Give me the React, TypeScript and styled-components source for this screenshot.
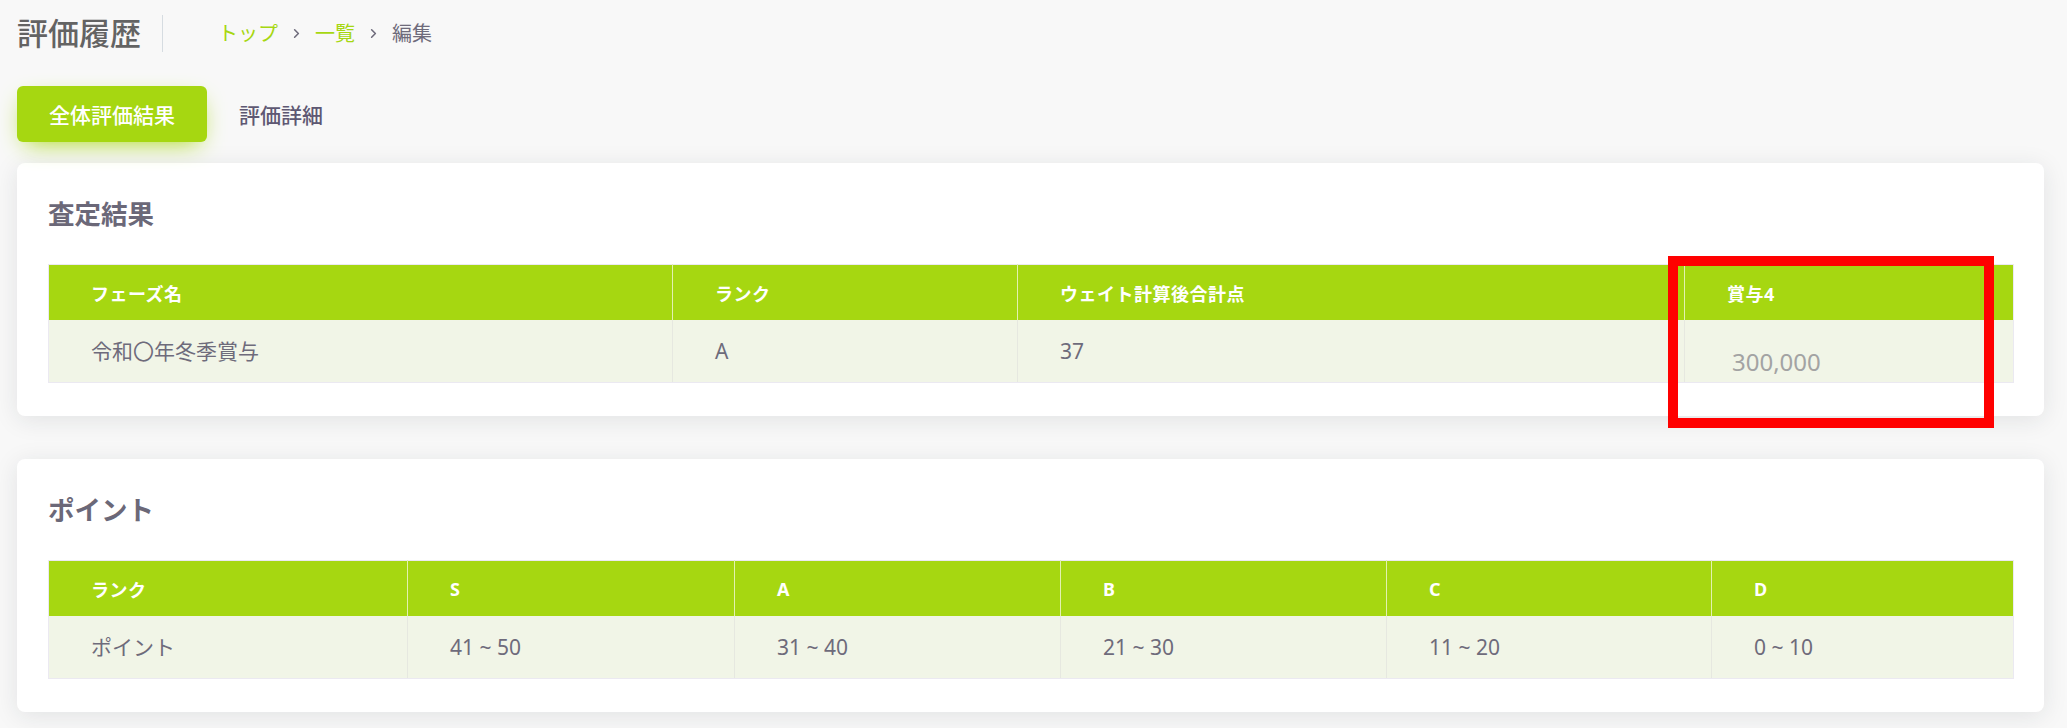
import React from 'react';
import styled, { createGlobalStyle } from 'styled-components';

// Type層
type Column = { label: string; width: number };
type Props = { className?: string };

const GREEN = '#a6d711';

const GlobalStyle = createGlobalStyle`
  body {
    margin: 0;
    background: #f8f8f8;
    font-family: 'Noto Sans', 'Noto Sans CJK JP', sans-serif;
    color: #6e6b7b;
  }
`;

// データ
const resultColumns: Column[] = [
  { label: 'フェーズ名', width: 624 },
  { label: 'ランク', width: 345 },
  { label: 'ウェイト計算後合計点', width: 667 },
  { label: '賞与4', width: 329 },
];

const pointColumns: Column[] = [
  { label: 'ランク', width: 359 },
  { label: 'S', width: 327 },
  { label: 'A', width: 326 },
  { label: 'B', width: 326 },
  { label: 'C', width: 325 },
  { label: 'D', width: 302 },
];

const pointRow = ['ポイント', '41 ~ 50', '31 ~ 40', '21 ~ 30', '11 ~ 20', '0 ~ 10'];

// Style層
const Page = styled.div`
  padding: 15px 23px 20px 17px;
`;

const HeaderBar = styled.div`
  display: flex;
  align-items: center;
  height: 37px;
`;

const Title = styled.h2`
  margin: 0;
  padding-right: 21px;
  border-right: 1px solid #d6dce1;
  font-size: 31px;
  font-weight: 500;
  line-height: 37px;
  color: #636363;
`;

const Breadcrumb = styled.nav`
  display: flex;
  align-items: center;
  margin-left: 55px;
  font-size: 20px;
  line-height: 28px;
`;

const Crumb = styled.span<{ $active?: boolean }>`
  color: ${(p) => (p.$active ? '#6e6b7b' : GREEN)};
`;

const Chevron = styled.svg`
  width: 15px;
  height: 15px;
  margin: 0 11px;
  stroke: #6e6b7b;
`;

const Tabs = styled.div`
  display: flex;
  align-items: center;
  margin-top: 34px;
`;

const Tab = styled.button<{ $active?: boolean }>`
  height: 56px;
  padding: 0 32px;
  border: 0;
  border-radius: 6px;
  font-family: inherit;
  font-size: 21px;
  font-weight: 500;
  background: ${(p) => (p.$active ? GREEN : 'transparent')};
  color: ${(p) => (p.$active ? '#fff' : '#5e5873')};
  box-shadow: ${(p) => (p.$active ? `0 8px 25px -8px ${GREEN}` : 'none')};
`;

const Card = styled.section`
  margin-top: 21px;
  padding: 31px 31px 33px;
  background: #fff;
  border-radius: 8px;
  box-shadow: 0 4px 24px 0 rgba(34, 41, 47, 0.1);

  & + & {
    margin-top: 43px;
  }
`;

const CardTitle = styled.h4`
  margin: 0 0 30px;
  font-size: 26.5px;
  font-weight: 700;
  line-height: 40px;
  color: #6b6878;
`;

const TableWrap = styled.div`
  position: relative;
`;

const Table = styled.table`
  width: 100%;
  table-layout: fixed;
  border-collapse: collapse;
  border: 1px solid #ebe9f1;
`;

const Th = styled.th`
  height: 55px;
  padding: 0 42px;
  background: ${GREEN};
  border-left: 1px solid #e3f1b0;
  text-align: left;
  font-size: 18px;
  font-weight: 700;
  letter-spacing: 0.5px;
  color: #fff;

  &:first-child {
    border-left: 0;
  }
`;

const Td = styled.td`
  height: 62px;
  padding: 0 42px;
  background: #f1f5e7;
  border-left: 1px solid #e6e8e0;
  border-bottom: 1px solid #ebe9f1;
  font-size: 21px;
  line-height: 30px;
  color: #6e6b7b;

  &:first-child {
    border-left: 0;
  }
`;

const Amount = styled.span`
  display: block;
  margin: 11px 0 -11px 5px;
  font-size: 24px;
  color: #a3a3a3;
`;

const Highlight = styled.div`
  position: absolute;
  left: 1620px;
  top: -8px;
  width: 326px;
  height: 172px;
  box-sizing: border-box;
  border: 10px solid #ff0000;
  pointer-events: none;
`;

const HeadRow: React.FC<{ columns: Column[] }> = ({ columns }) => (
  <>
    <colgroup>
      {columns.map((c) => (
        <col key={c.label} style={{ width: c.width }} />
      ))}
    </colgroup>
    <thead>
      <tr>
        {columns.map((c) => (
          <Th key={c.label}>{c.label}</Th>
        ))}
      </tr>
    </thead>
  </>
);

// DOM層
const Component: React.FC<Props> = (props) => {
  return (
    <Page className={props.className}>
      <GlobalStyle />
      <HeaderBar>
        <Title>評価履歴</Title>
        <Breadcrumb>
          <Crumb>トップ</Crumb>
          <Chevron viewBox="0 0 24 24" fill="none" strokeWidth={2.5} strokeLinecap="round" strokeLinejoin="round">
            <polyline points="9 6 15 12 9 18" />
          </Chevron>
          <Crumb>一覧</Crumb>
          <Chevron viewBox="0 0 24 24" fill="none" strokeWidth={2.5} strokeLinecap="round" strokeLinejoin="round">
            <polyline points="9 6 15 12 9 18" />
          </Chevron>
          <Crumb $active>編集</Crumb>
        </Breadcrumb>
      </HeaderBar>

      <Tabs>
        <Tab $active>全体評価結果</Tab>
        <Tab>評価詳細</Tab>
      </Tabs>

      <Card>
        <CardTitle>査定結果</CardTitle>
        <TableWrap>
          <Table>
            <HeadRow columns={resultColumns} />
            <tbody>
              <tr>
                <Td>令和〇年冬季賞与</Td>
                <Td>A</Td>
                <Td>37</Td>
                <Td>
                  <Amount>300,000</Amount>
                </Td>
              </tr>
            </tbody>
          </Table>
          <Highlight />
        </TableWrap>
      </Card>

      <Card>
        <CardTitle>ポイント</CardTitle>
        <TableWrap>
          <Table>
            <HeadRow columns={pointColumns} />
            <tbody>
              <tr>
                {pointRow.map((v) => (
                  <Td key={v}>{v}</Td>
                ))}
              </tr>
            </tbody>
          </Table>
        </TableWrap>
      </Card>
    </Page>
  );
};

export default Component;
